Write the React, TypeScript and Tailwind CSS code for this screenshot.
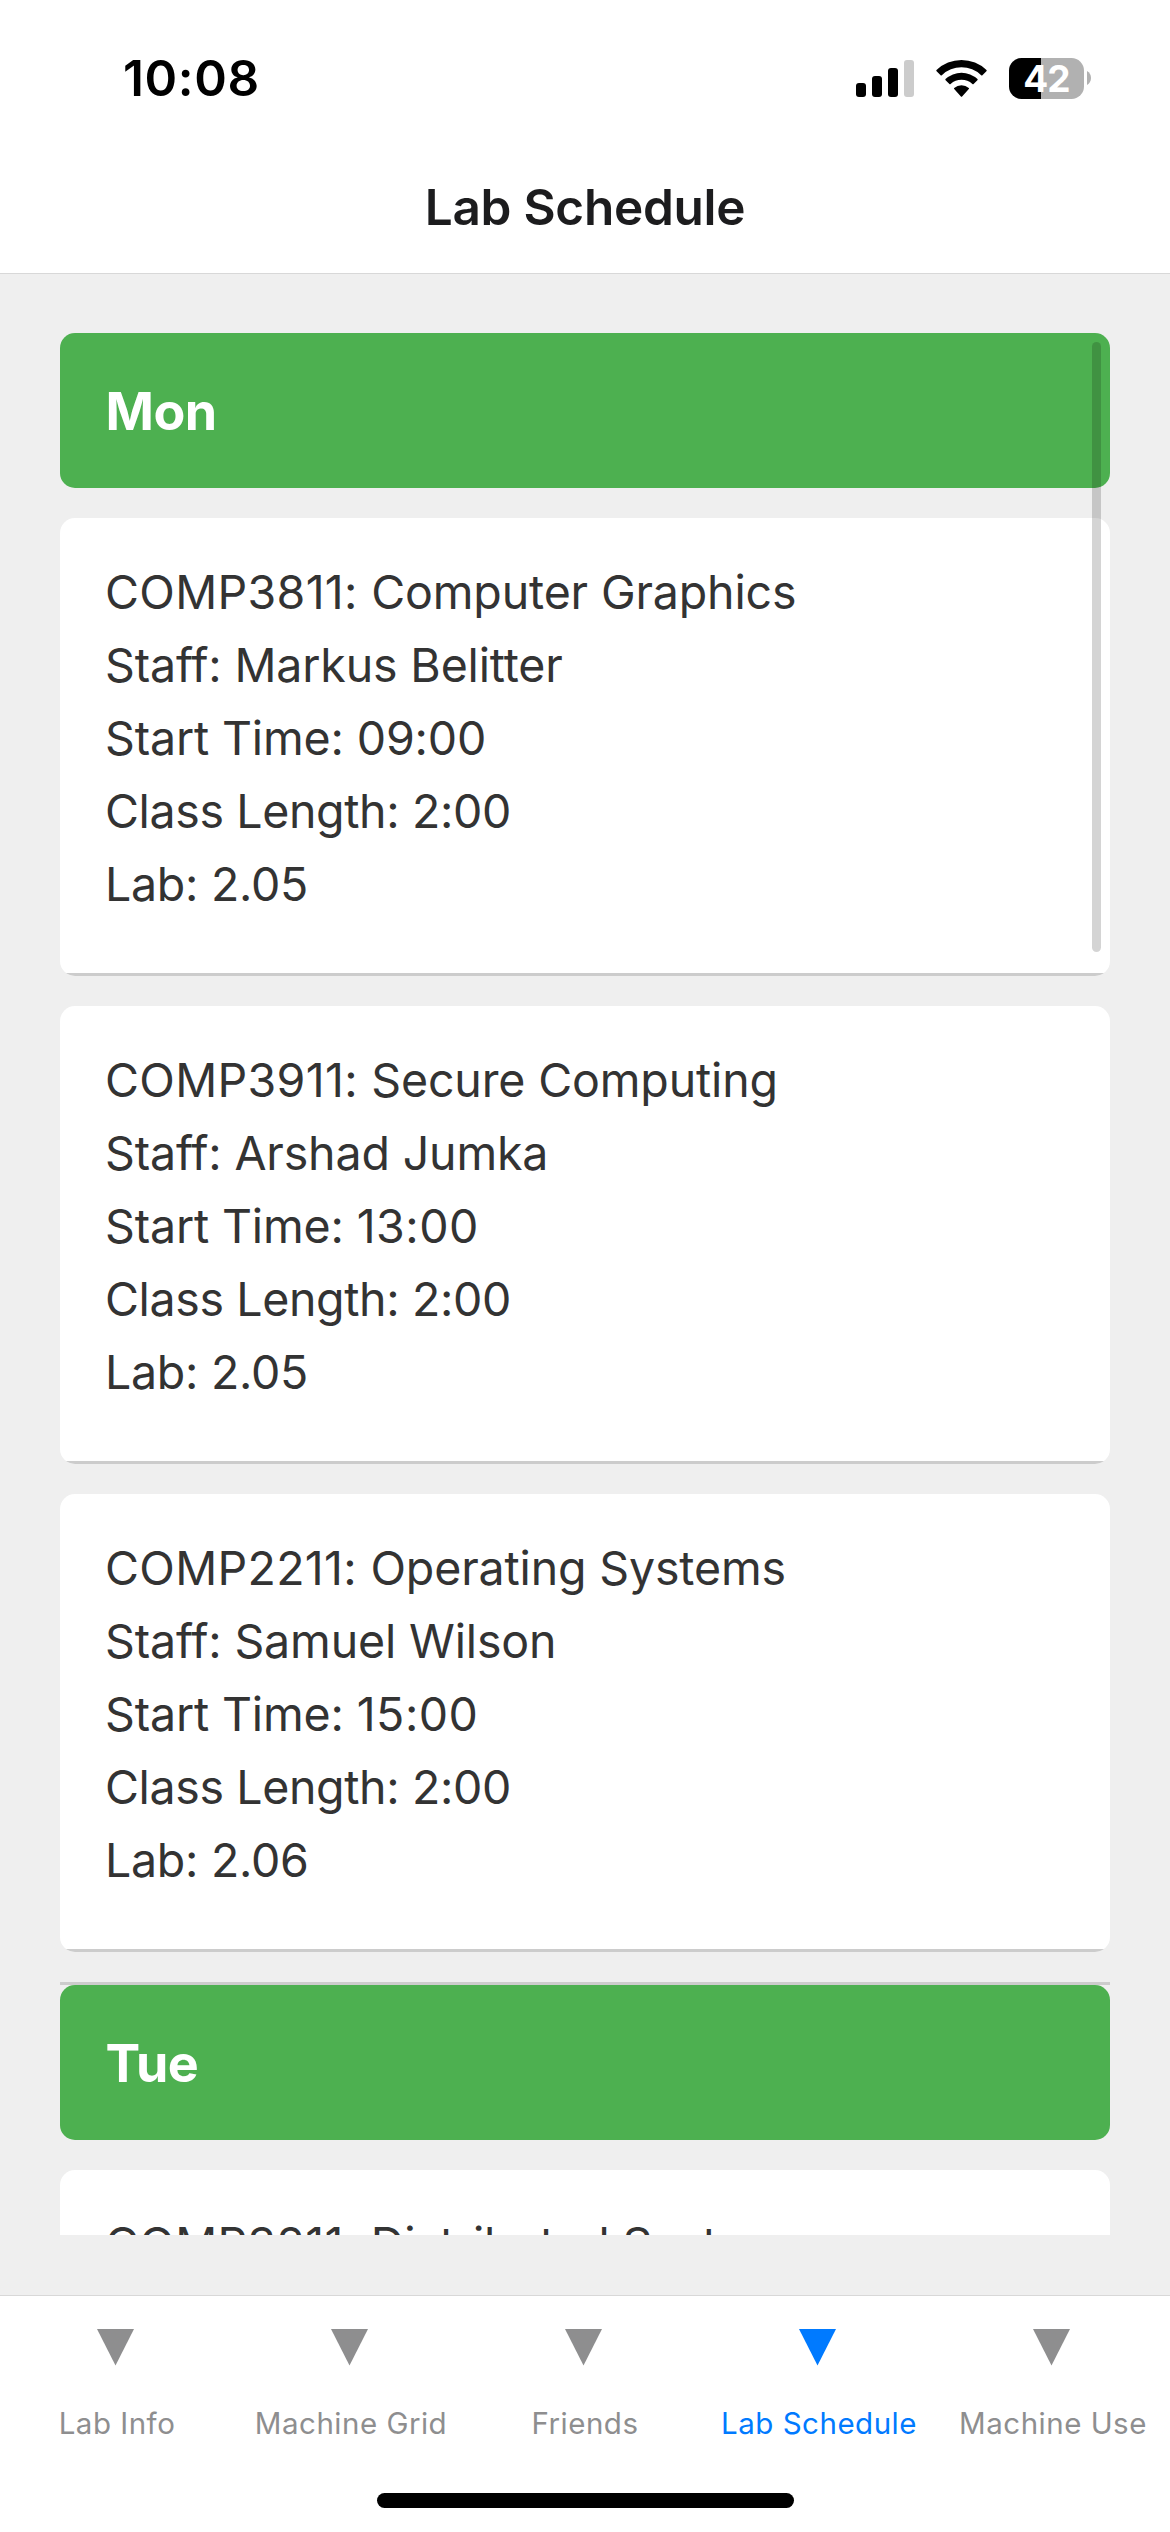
type Lab = {
  code: string;
  name: string;
  staff?: string;
  start?: string;
  length?: string;
  room?: string;
};

type Day = { day: string; labs: Lab[] };

const schedule: Day[] = [
  {
    day: "Mon",
    labs: [
      { code: "COMP3811", name: "Computer Graphics", staff: "Markus Belitter", start: "09:00", length: "2:00", room: "2.05" },
      { code: "COMP3911", name: "Secure Computing", staff: "Arshad Jumka", start: "13:00", length: "2:00", room: "2.05" },
      { code: "COMP2211", name: "Operating Systems", staff: "Samuel Wilson", start: "15:00", length: "2:00", room: "2.06" },
    ],
  },
  {
    day: "Tue",
    labs: [{ code: "COMP3211", name: "Distributed Systems" }],
  },
];

const tabs = ["Lab Info", "Machine Grid", "Friends", "Lab Schedule", "Machine Use"];

function SignalIcon() {
  return (
    <svg width="58" height="37" viewBox="0 0 58 37">
      <rect x="0" y="23" width="10" height="14" rx="3" fill="#000" />
      <rect x="16" y="16" width="10" height="21" rx="3" fill="#000" />
      <rect x="32" y="8" width="10" height="29" rx="3" fill="#000" />
      <rect x="48" y="0" width="10" height="37" rx="3" fill="#ccc" />
    </svg>
  );
}

function WifiIcon() {
  return (
    <svg width="51" height="37" viewBox="0 0 51 37">
      <path d="M0.5 10.1A36 36 0 0 1 50.5 10.1Q51 10.7 50.4 11.2L46.4 15.2Q45.8 15.8 45.2 15.2A28.6 28.6 0 0 0 5.8 15.2Q5.2 15.8 4.6 15.2L0.6 11.2Q0 10.7 0.5 10.1Z" />
      <path d="M9.5 19.1A23.3 23.3 0 0 1 41.5 19.1Q42 19.7 41.4 20.2L37.6 24Q37 24.6 36.4 24A16.2 16.2 0 0 0 14.6 24Q14 24.6 13.4 24L9.6 20.2Q9 19.7 9.5 19.1Z" />
      <path d="M18.2 27.9A11.2 11.2 0 0 1 32.8 27.9Q33.4 28.5 32.8 29.1L26.1 36.4Q25.5 37 24.9 36.4L18.2 29.1Q17.6 28.5 18.2 27.9Z" />
    </svg>
  );
}

function Battery() {
  return (
    <div className="flex items-center">
      <div className="flex h-[41px] w-[75px] items-center justify-center rounded-[12.5px] bg-[linear-gradient(to_right,#000_32px,#b1b1b1_32px)]">
        <span className="text-[37px] leading-[45px] font-bold tracking-[-1px] text-white">42</span>
      </div>
      <svg className="ml-[3px]" width="4" height="14" viewBox="0 0 4 14">
        <path d="M0 0C2.6 1.4 4 4 4 7S2.6 12.6 0 14Z" fill="#b1b1b1" />
      </svg>
    </div>
  );
}

function LabCard({ lab }: { lab: Lab }) {
  return (
    <div className="mb-[30px] flex h-[458px] flex-col justify-between overflow-hidden rounded-[15px] bg-white">
      <div className="flex flex-col gap-px px-[45px] pt-[38px] text-[46.5px] leading-[72px] tracking-[-0.15px] whitespace-nowrap text-[#333]">
        <p>
          <span className="tracking-[0.32px]">{lab.code}: </span>
          {lab.name}
        </p>
        {lab.staff && <p>Staff: {lab.staff}</p>}
        {lab.start && (
          <p>
            Start Time: <span className={lab.start.startsWith("1") ? "tracking-[0.5px]" : ""}>{lab.start}</span>
          </p>
        )}
        {lab.length && <p className="tracking-[-0.37px]">Class Length: {lab.length}</p>}
        {lab.room && <p className="tracking-[-0.29px]">Lab: {lab.room}</p>}
      </div>
      <div className="h-[3px] bg-[#ccc]" />
    </div>
  );
}

export default function App() {
  return (
    <div className="flex h-[2532px] w-[1170px] flex-col overflow-hidden bg-[#efefef] font-['Inter',sans-serif]">
      <header className="h-[274px] shrink-0 border-b border-[#d8d8d8] bg-white">
        <div className="flex h-[130px] items-start justify-between pt-12 pr-[79px] pl-[123px]">
          <span className="text-[49.5px] leading-[60px] font-semibold tracking-[0.6px] text-black">10:08</span>
          <div className="flex h-[60px] items-center">
            <div className="flex items-center gap-[22px]">
              <SignalIcon />
              <WifiIcon />
              <Battery />
            </div>
          </div>
        </div>
        <h1 className="pt-[47px] text-center text-[49.5px] leading-[60px] font-semibold tracking-[-0.28px] text-[#1c1c1e]">
          Lab Schedule
        </h1>
      </header>

      <main className="min-h-0 flex-1 px-[60px] pt-[59px] pb-[60px]">
        <div className="relative h-full overflow-hidden">
          {schedule.map((entry, i) => (
            <section key={entry.day}>
              {i > 0 && <div className="h-[3px] bg-[#ccc]" />}
              <div className="mb-[30px] h-[155px] rounded-[15px] bg-[#4db050] px-[45.5px] pt-[47px]">
                <h2 className="text-[52px] leading-[63px] font-bold tracking-[-0.5px] text-white">{entry.day}</h2>
              </div>
              {entry.labs.map((lab) => (
                <LabCard key={lab.code} lab={lab} />
              ))}
            </section>
          ))}
          <div className="absolute top-[9px] right-[9px] h-[610px] w-[9px] rounded-full bg-black/[0.17]" />
        </div>
      </main>

      <nav className="flex h-[237px] shrink-0 flex-col items-center border-t border-[#d8d8d8] bg-white">
        <div className="grid w-full grid-cols-5">
          {tabs.map((tab) => (
            <button
              key={tab}
              className={
                tab === "Lab Schedule"
                  ? "flex flex-col items-center pt-[33px] text-[#007aff]"
                  : "flex flex-col items-center pt-[33px] text-[#8e8e8f]"
              }
            >
              <svg className="mr-[3px]" width="37" height="37" viewBox="0 0 37 37" fill="currentColor">
                <path d="M0 0H37L18.5 36.5Z" />
              </svg>
              <span className="mt-[39px] text-[29.5px] leading-9 tracking-[0.5px] whitespace-nowrap">{tab}</span>
            </button>
          ))}
        </div>
        <div className="mt-[52px] h-[15px] w-[417px] rounded-full bg-black" />
      </nav>
    </div>
  );
}
